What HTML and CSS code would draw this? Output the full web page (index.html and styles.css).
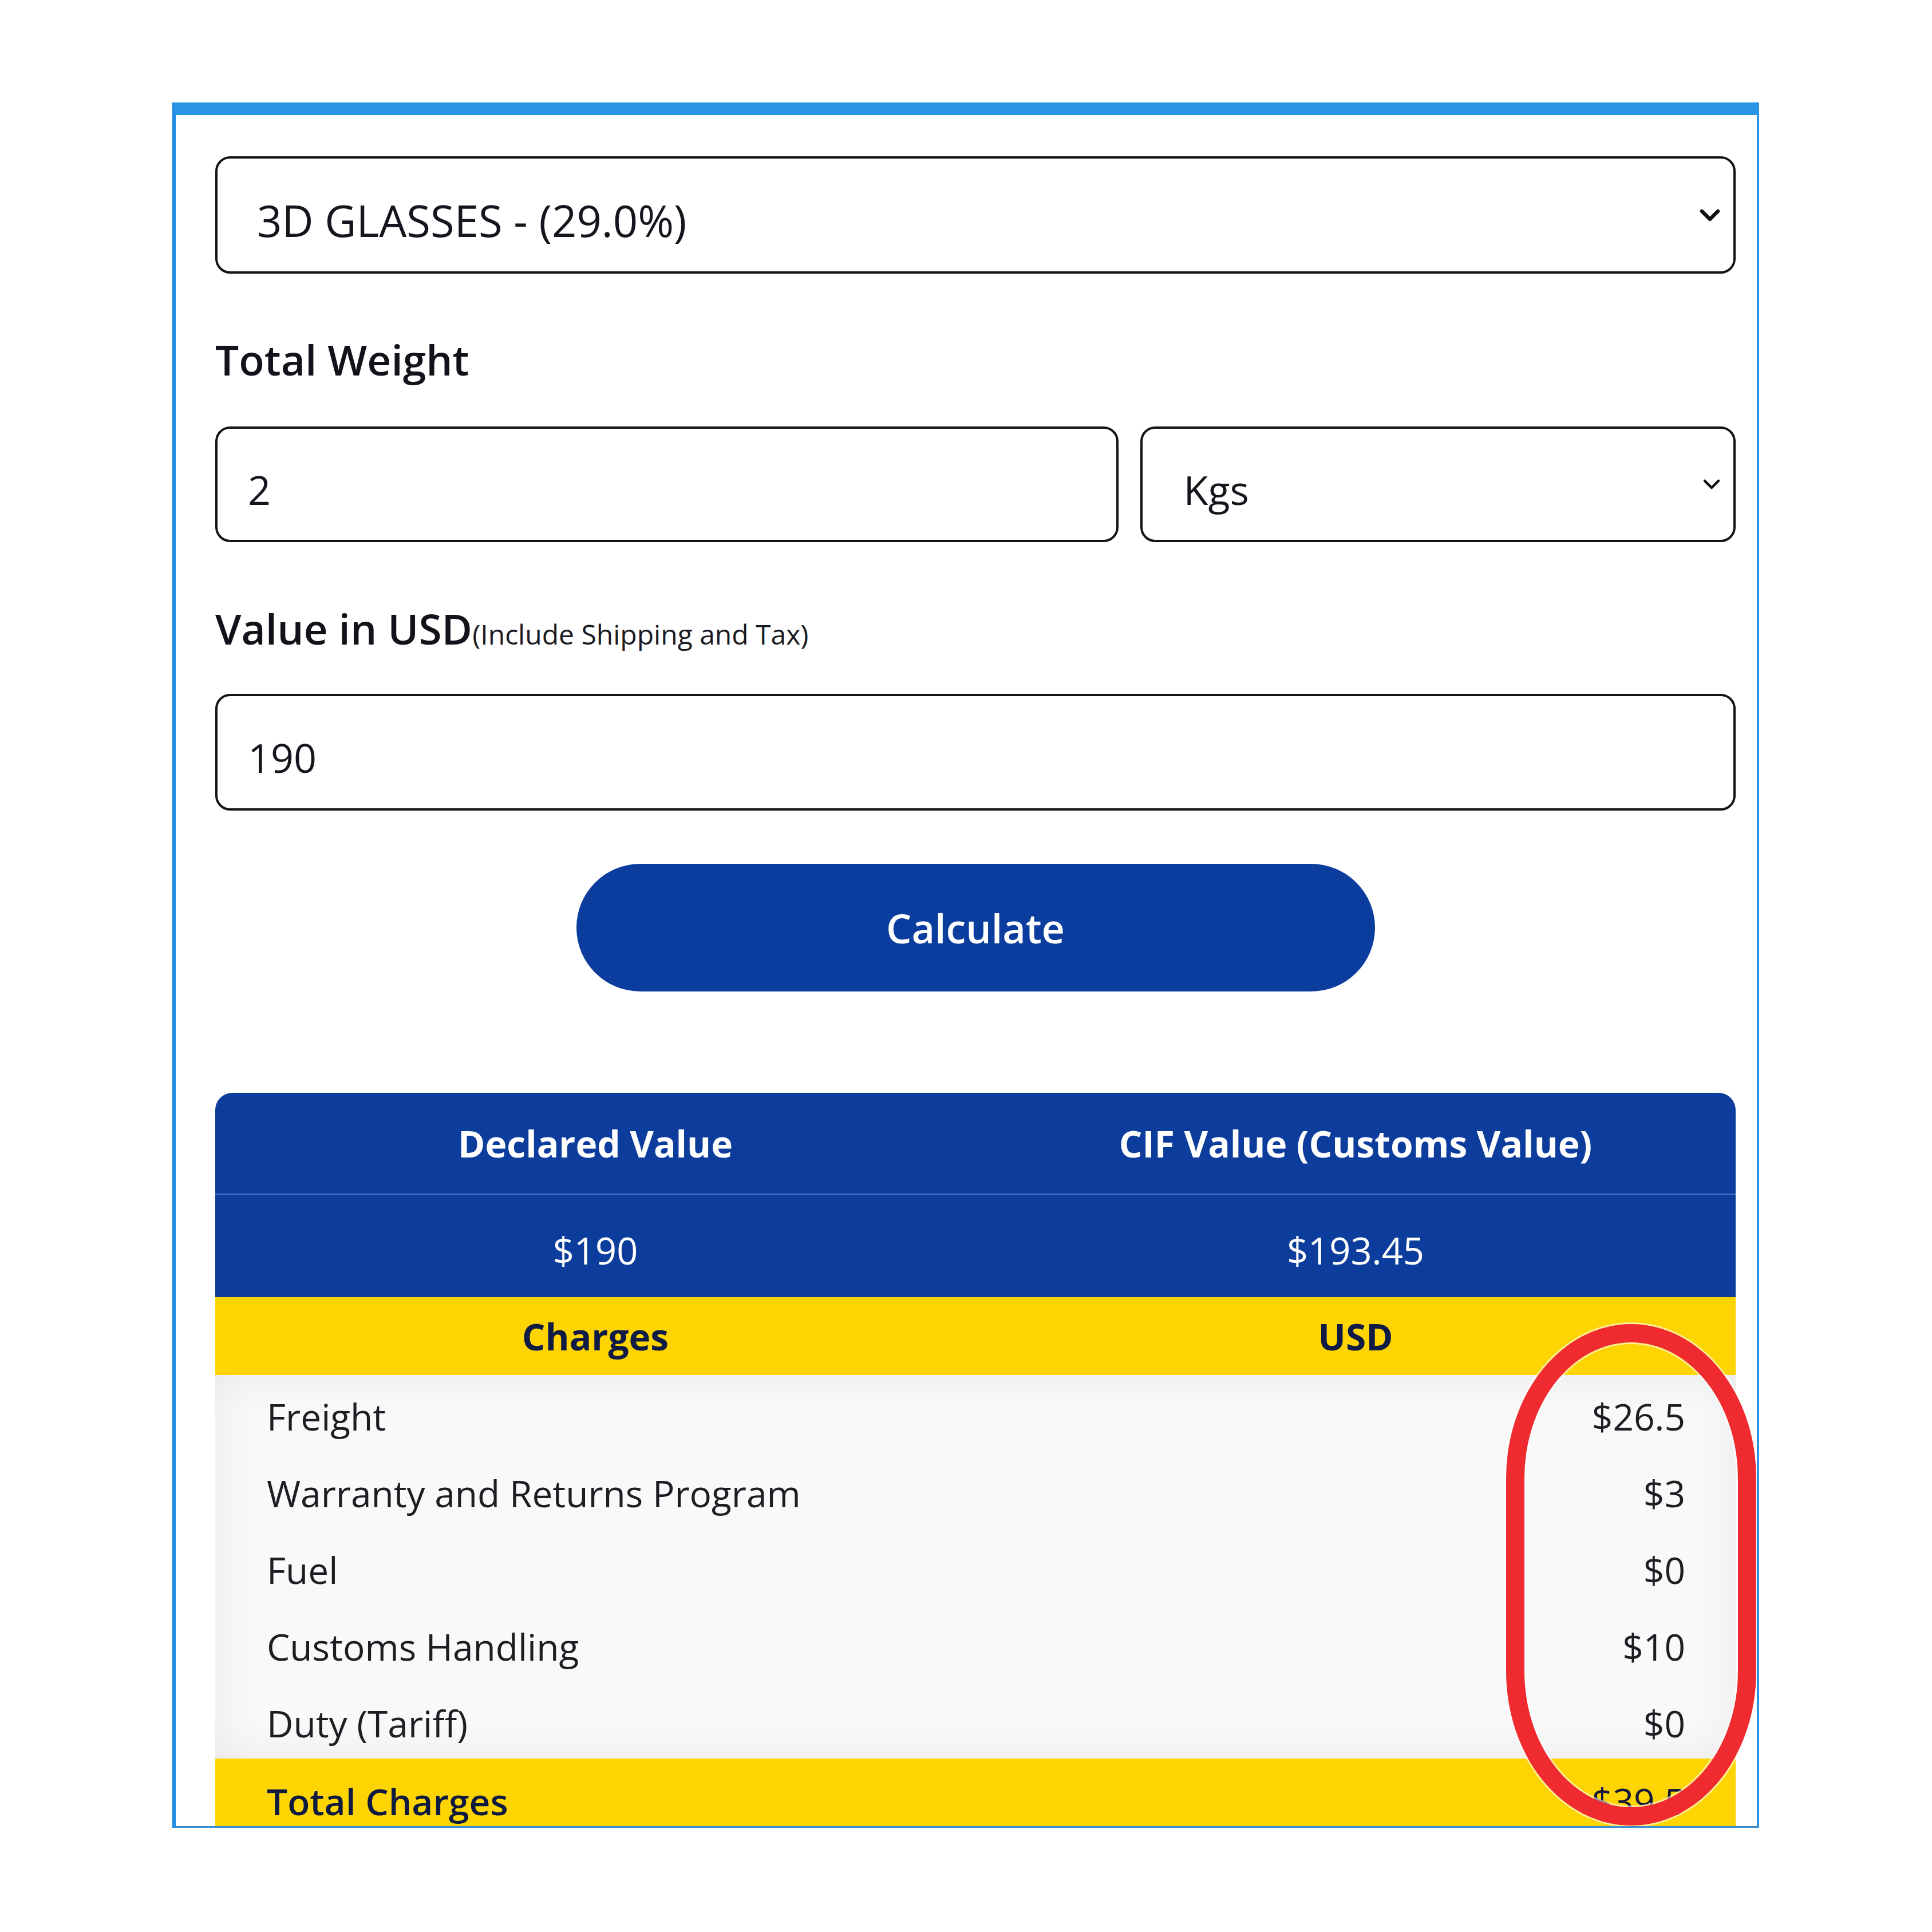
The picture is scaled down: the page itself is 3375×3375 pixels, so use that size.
FILE: index.html
```html
<!DOCTYPE html>
<html lang="en">
<head>
<meta charset="utf-8">
<title>Duty Calculator</title>
<link rel="stylesheet" href="styles.css">
</head>
<body>
<div class="frame">
  <div class="field field-main">
    <span class="field-text">3D GLASSES - (29.0%)</span>
    <svg class="chev" width="36" height="24" viewBox="0 0 36 24"><path d="M4 5 L18 19 L32 5" fill="none" stroke="#111" stroke-width="6.5" stroke-linecap="round" stroke-linejoin="round"/></svg>
  </div>

  <div class="label">Total Weight</div>
  <div class="weight-row">
    <div class="field field-input"><span class="field-text">2</span></div>
    <div class="field field-unit">
      <span class="field-text">Kgs</span>
      <svg class="chev" width="32" height="22" viewBox="0 0 32 22"><path d="M4 5 L16 17 L28 5" fill="none" stroke="#111" stroke-width="4.5" stroke-linecap="round" stroke-linejoin="round"/></svg>
    </div>
  </div>

  <div class="label label-value">Value in USD<span class="hint">(Include Shipping and Tax)</span></div>
  <div class="field field-input field-value"><span class="field-text">190</span></div>

  <div class="btn-wrap"><button class="calc" type="button">Calculate</button></div>

  <div class="results">
    <div class="sheet">
      <div class="row row-head">
        <div class="cell">Declared Value</div>
        <div class="cell">CIF Value (Customs Value)</div>
      </div>
      <div class="row row-vals">
        <div class="cell">$190</div>
        <div class="cell">$193.45</div>
      </div>
      <div class="row row-yellow">
        <div class="cell">Charges</div>
        <div class="cell">USD</div>
      </div>
      <div class="lines">
        <div class="line"><span>Freight</span><span>$26.5</span></div>
        <div class="line"><span>Warranty and Returns Program</span><span>$3</span></div>
        <div class="line"><span>Fuel</span><span>$0</span></div>
        <div class="line"><span>Customs Handling</span><span>$10</span></div>
        <div class="line"><span>Duty (Tariff)</span><span>$0</span></div>
      </div>
      <div class="line line-total"><span class="total-label">Total Charges</span><span>$39.5</span></div>
    </div>
    <div class="annotation"></div>
  </div>
</div>
</body>
</html>
```

FILE: styles.css
```css
html, body {
  margin: 0;
  padding: 0;
  background: #ffffff;
}

body {
  font-family: "Open Sans", "Noto Sans", "Liberation Sans", sans-serif;
  color: #14141c;
}

.frame {
  box-sizing: border-box;
  width: 2772px;
  height: 3014px;
  margin: 179px 0 0 301px;
  border-top: 22px solid #2894e4;
  border-left: 6px solid #1f8ae6;
  border-right: 4px solid #2a93e3;
  border-bottom: 3px solid #3b8fce;
  padding: 72px 37px 0 69px;
  overflow: hidden;
  background: #ffffff;
}

/* ---------- form fields ---------- */
.field {
  box-sizing: border-box;
  display: flex;
  align-items: center;
  justify-content: space-between;
  border: 4px solid #141414;
  border-radius: 26px;
  background: #ffffff;
  color: #15151d;
}

.field-text {
  margin-top: 18px;
  line-height: 1.2;
  white-space: nowrap;
}

.field-main {
  height: 205px;
  padding: 0 23px 0 69px;
  font-size: 76px;
}

.field-input {
  height: 202px;
  padding: 0 40px 0 53px;
  font-size: 70px;
}

.field-unit {
  height: 202px;
  padding: 0 22px 0 72px;
  font-size: 70px;
}

.field-value {
  height: 204px;
}

.chev {
  display: block;
  flex: none;
}

.label {
  margin-top: 104px;
  height: 91px;
  font-size: 73px;
  font-weight: 600;
  line-height: 91px;
  color: #12121a;
  white-space: nowrap;
}

.label-value {
  margin-top: 105px;
}

.hint {
  font-size: 48px;
  font-weight: 400;
  line-height: 1;
  color: #1a1a22;
}

.weight-row {
  margin-top: 72px;
  display: grid;
  grid-template-columns: 1577fr 1040fr;
  column-gap: 38px;
}

.label + .field-value {
  margin-top: 69px;
}

/* ---------- button ---------- */
.btn-wrap {
  margin-top: 93px;
  display: flex;
  justify-content: center;
}

.calc {
  width: 1395px;
  height: 223px;
  border: none;
  border-radius: 112px;
  background: #0b3d9e;
  color: #ffffff;
  font-family: "Open Sans", "Noto Sans", "Liberation Sans", sans-serif;
  font-size: 70px;
  font-weight: 600;
  padding: 0;
}

/* ---------- results ---------- */
.results {
  position: relative;
  margin-top: 177px;
}

.sheet {
  border-radius: 30px 30px 0 0;
  overflow: hidden;
}

.row {
  display: grid;
  grid-template-columns: 1fr 1fr;
  align-items: center;
  text-align: center;
  font-size: 64px;
}

.row-head {
  height: 176px;
  background: #0c3d9c;
  color: #ffffff;
  font-weight: 700;
  border-bottom: 2px solid #4677d0;
}

.row-vals {
  height: 179px;
  background: #0c3d9c;
  color: #ffffff;
  font-size: 65px;
}

.row-vals .cell {
  padding-top: 14px;
}

.row-yellow {
  height: 136px;
  background: #fed502;
  color: #0f1a45;
  font-weight: 700;
}

.lines {
  background: #f9f9f9;
  box-shadow: inset 0 0 80px rgba(0, 0, 0, 0.07);
}

.line {
  box-sizing: border-box;
  height: 134px;
  display: flex;
  align-items: center;
  justify-content: space-between;
  padding: 10px 88px 0 90px;
  font-size: 64px;
  color: #1d1d24;
}

.line-total {
  background: #fed502;
  color: #15183a;
  padding-top: 14px;
}

.total-label {
  font-weight: 600;
  color: #0f1a40;
}

/* red hand-drawn highlight overlaid on the values column */
.annotation {
  position: absolute;
  left: 2255px;
  top: 404px;
  width: 437px;
  height: 876px;
  box-sizing: border-box;
  border: 32px solid #ef2b2f;
  border-radius: 219px / 270px;
  box-shadow: 0 0 0 3px rgba(255, 255, 255, 0.6), inset 0 0 0 3px rgba(255, 255, 255, 0.6);
}
```
